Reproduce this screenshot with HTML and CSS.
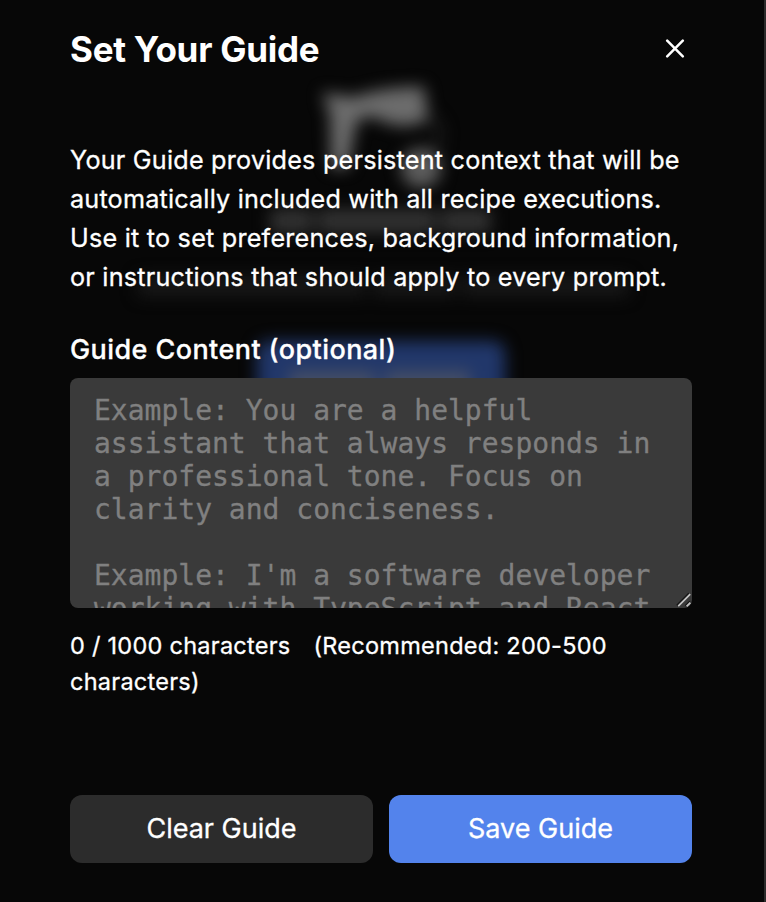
FILE: index.html
```html
<!DOCTYPE html>
<html lang="en">
<head>
<meta charset="utf-8">
<title>Set Your Guide</title>
<link rel="stylesheet" href="styles.css">
</head>
<body>
<div class="backdrop" aria-hidden="true">
  <svg class="backdrop-art" viewBox="0 0 766 902">
    <g class="blur">
      <path d="M322 93 L354 97 Q385 86 424 87 L428 120 Q400 132 379 119 Q362 113 356 124 L348 168 L331 168 L330 114 Z" fill="#6c6c6c"/>
      <path d="M430 116 L440 130 L437 150" fill="none" stroke="#222" stroke-width="6"/>
      <circle cx="421" cy="168" r="20" fill="#5c5c5c"/>
      <path d="M270 221H313M318 221H436M441 221H491" fill="none" stroke="#323232" stroke-width="24"/>
      <path d="M138 286H365M373 286H456M462 286H628" fill="none" stroke="#181818" stroke-width="20"/>
      <rect x="257" y="341" width="248" height="72" rx="12" fill="#21376a"/>
      <path d="M289 382H375M385 382H470" stroke="#464f65" stroke-width="22"/>
    </g>
  </svg>
</div>
<main class="dialog">
  <header class="header">
    <h1 class="title">Set Your Guide</h1>
    <button class="close" aria-label="Close">
      <svg width="20" height="20" viewBox="0 0 20 20"><path d="M2.2 1.7L17.8 17.3M17.8 1.7L2.2 17.3" fill="none" stroke="#fff" stroke-width="2.5" stroke-linecap="round"/></svg>
    </button>
  </header>
  <p class="intro">Your Guide provides persistent context that will be<br><span class="tight">automatically included with all recipe executions.</span><br>Use it to set preferences, background information,<br>or instructions that should apply to every prompt.</p>
  <label class="label" for="guide">Guide Content (optional)</label>
  <div class="field">
    <textarea id="guide" class="input" placeholder="Example: You are a helpful assistant that always responds in a professional tone. Focus on clarity and conciseness.

Example: I'm a software developer working with TypeScript and React."></textarea>
    <svg class="grip" width="16" height="16" viewBox="0 0 16 16"><path d="M1 13.5L13 1.5M9.5 14L14 9.5" stroke="#151515" stroke-width="2"/><path d="M2.2 14.2L14.2 2.2M10.6 14.4L14.4 10.6" stroke="#c4c4c4" stroke-width="1.8"/></svg>
  </div>
  <p class="hint"><span class="count">0 / 1000 characters</span><span>(Recommended: 200-500</span><br>characters)</p>
  <footer class="actions">
    <button class="button">Clear Guide</button>
    <button class="button primary">Save Guide</button>
  </footer>
</main>
</body>
</html>
```

FILE: styles.css
```css
* { box-sizing: border-box; }
body {
  margin: 0;
  width: 766px;
  height: 902px;
  overflow: hidden;
  background: #070707;
  color: #fff;
  font-family: Inter, sans-serif;
}
.backdrop {
  position: absolute;
  inset: 0;
  border-right: 2px solid #2b2b2b;
}
.backdrop-art { display: block; width: 766px; height: 902px; }
.blur { filter: blur(8px); }
.dialog {
  position: relative;
  display: flex;
  flex-direction: column;
  height: 902px;
  padding: 24px 74px 39px 70px;
}
.header {
  display: flex;
  align-items: center;
  justify-content: space-between;
  height: 50px;
  padding-right: 7px;
}
.title {
  margin: 0;
  font-size: 35px;
  font-weight: 700;
  line-height: 50px;
  letter-spacing: -0.25px;
}
.close {
  display: flex;
  padding: 0;
  border: 0;
  background: none;
}
.intro {
  margin: 67px 0 0;
  font-size: 25.2px;
  line-height: 39px;
  letter-spacing: 0.22px;
  white-space: nowrap;
  -webkit-text-stroke: 0.3px #fff;
}
.tight { letter-spacing: 0.19px; }
.label {
  margin-top: 33px;
  font-size: 27px;
  font-weight: 500;
  line-height: 40px;
  letter-spacing: 0.42px;
  -webkit-text-stroke: 0.3px #fff;
}
.field { position: relative; margin-top: 8px; height: 230px; }
.input {
  display: block;
  width: 622px;
  height: 230px;
  padding: 16px 24px;
  border: 0;
  border-radius: 8px;
  background: #3a3a3a;
  color: #fff;
  font: 28px/33px "DejaVu Sans Mono", monospace;
  resize: none;
  overflow: hidden;
}
.input::placeholder { color: #808080; opacity: 1; -webkit-text-stroke: 0.3px #808080; }
.grip { position: absolute; right: 0; bottom: 0; }
.hint {
  margin: 20px 0 0;
  font-size: 23.5px;
  line-height: 36px;
  letter-spacing: 0.26px;
  white-space: nowrap;
  -webkit-text-stroke: 0.3px #fff;
}
.count { margin-right: 23px; }
.actions {
  display: grid;
  grid-template-columns: 1fr 1fr;
  gap: 16px;
  margin-top: auto;
}
.button {
  height: 68px;
  padding: 0 0 2px;
  border: 0;
  border-radius: 12px;
  background: #2c2c2c;
  color: #fff;
  font: 400 27px Inter, sans-serif;
  -webkit-text-stroke: 0.3px #fff;
}
.primary { background: #5383ec; }
```
